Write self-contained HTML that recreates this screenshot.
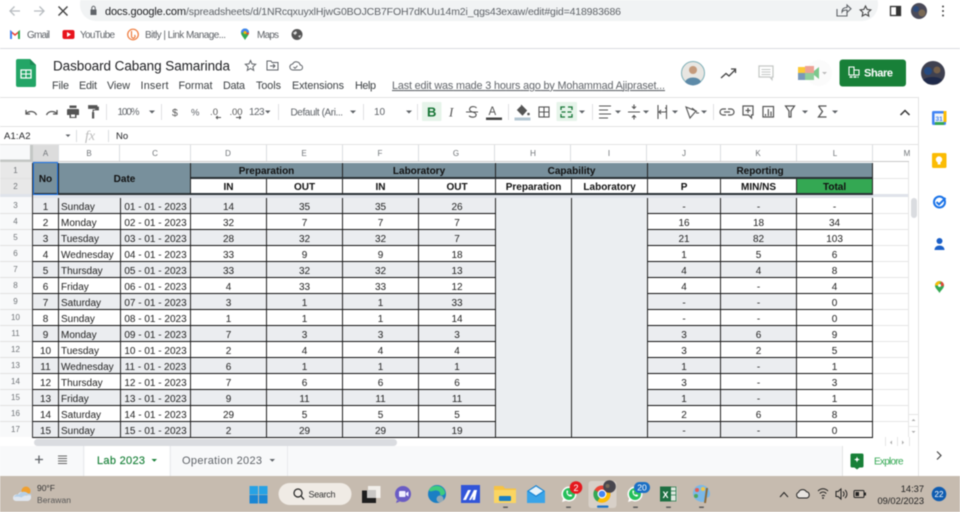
<!DOCTYPE html>
<html lang="en"><head><meta charset="utf-8"><title>Dasboard Cabang Samarinda</title>
<style>
html,body{margin:0;padding:0;background:#fff}
#p{position:relative;width:960px;height:512px;overflow:hidden;font-family:"Liberation Sans",sans-serif;filter:blur(.4px)}
svg.c{position:absolute;left:0;top:0}
svg text{font-family:"Liberation Sans",sans-serif}
table.g{position:absolute;left:33px;top:163px;border-collapse:separate;border-spacing:0;table-layout:fixed;width:840px;font-size:10px;color:#222;border-left:1px solid #333;margin-left:-1px}
table.g td{box-sizing:border-box;height:16px;padding:5px 0 0;line-height:10px;text-align:center;border-right:1px solid #222;border-bottom:1px solid #111;overflow:hidden;white-space:nowrap;background:#fff}
table.g td.l{text-align:left;padding-left:2px}
table.g tr.a td{background:#ebedf0}
table.g tr.a td.w{background:#fff}
table.g td.h{background:#78909c;font-weight:bold;color:#111;border-bottom:2px solid #2a3236;padding-top:4px;line-height:10px}
table.g td.r{padding-top:3px;line-height:14px}
table.g td.s{background:#fff;font-weight:bold;color:#111;border-bottom:2px solid #2a3236;padding-top:4px;line-height:10px}
table.g td.t{background:#34a853;font-weight:bold;color:#111;border-bottom:2px solid #2a3236;padding-top:4px;line-height:10px}
table.g td.m{background:#ebeef1 !important;vertical-align:top}
table.g tr.gap td{height:3px;padding:0;background:#dfe3ea;border:0;line-height:0;font-size:0}
#sel{position:absolute;left:33px;top:162px;width:25px;height:33px;box-sizing:border-box;border:1px solid #1a73e8}
</style></head><body><div id="p">
<svg class="c" width="960" height="512" viewBox="0 0 960 512">
<!-- browser top -->
<rect width="960" height="48" fill="#fff"/>
<rect x="80" y="-12" width="798" height="33" rx="16" fill="#f1f3f4"/>
<g fill="none" stroke="#b8bcc0" stroke-width="1.300"><path d="M20 11H10M14.500 6.500L10 11l4.500 4.500"/><path d="M34 11h10M39.500 6.500L44 11l-4.500 4.500"/></g>
<path d="M58.500 6.500l9 9M67.500 6.500l-9 9" stroke="#444" stroke-width="1.400" fill="none"/>
<path d="M90.500 9.500h6v5.500h-6z" fill="#5f6368"/><path d="M91.800 9.500V8a1.700 1.700 0 013.400 0v1.500" stroke="#5f6368" fill="none"/>
<text x="105" y="15" font-size="11" fill="#202124" textLength="81">docs.google.com</text>
<text x="186" y="15" font-size="10.500" fill="#5f6368" textLength="435">/spreadsheets/d/1NRcqxuyxlHjwG0BOJCB7FOH7dKUu14m2i_qgs43exaw/edit#gid=418983686</text>
<g fill="none" stroke="#5f6368" stroke-width="1.100"><path d="M837 9v7h10v-4M842 12c0-3 2-4.500 5-4.500V5l4 3.800-4 3.700v-2.500c-2 0-4 .5-5 2z"/><path d="M865.500 6l1.600 3.400 3.700.5-2.700 2.500.7 3.700-3.300-1.800-3.300 1.800.7-3.700-2.700-2.500 3.700-.5z" stroke="#444"/></g>
<rect x="890.500" y="6.500" width="10" height="9" fill="none" stroke="#333" stroke-width="1.300"/><rect x="896" y="6.500" width="4.500" height="9" fill="#333"/>
<circle cx="919" cy="11" r="8" fill="#4a4a58"/><circle cx="916" cy="9" r="3" fill="#2c4a7a"/><circle cx="922" cy="13" r="3.500" fill="#7a6a55"/>
<g fill="#444"><circle cx="943" cy="6.500" r="1"/><circle cx="943" cy="11" r="1"/><circle cx="943" cy="15.500" r="1"/></g>
<!-- bookmarks -->
<path d="M10 39V30l5 4 5-4v9h-2v-5.500l-3 2.500-3-2.500V39z" fill="#ea4335"/><path d="M10 39V30l2 1.500V39z" fill="#4285f4"/><path d="M20 39V30l-2 1.500V39z" fill="#34a853"/>
<text x="27" y="38" font-size="10" fill="#5f6368" textLength="23">Gmail</text>
<rect x="62.500" y="30" width="12" height="9" rx="2" fill="#e8141c"/><path d="M67 32l4 2.500-4 2.500z" fill="#fff"/>
<text x="80" y="38" font-size="10" fill="#5f6368" textLength="35">YouTube</text>
<circle cx="133" cy="34.500" r="5.300" fill="none" stroke="#ee7a3c" stroke-width="1.200"/><path d="M131.500 31v5.500a1.800 1.800 0 103-1.500" fill="none" stroke="#ee7a3c" stroke-width="1.200"/>
<text x="145" y="38" font-size="10" fill="#5f6368" textLength="81">Bitly | Link Manage...</text>
<path d="M245 40c-1.500-3-4-4.500-4-7.500a4 4 0 018 0c0 3-2.500 4.500-4 7.500z" fill="#34a853"/><path d="M241 32.500a4 4 0 018 0l-4 .3z" fill="#4285f4"/><path d="M249 32.500c0 1-.3 1.700-.8 2.500L245 33z" fill="#ea4335"/><circle cx="245" cy="32.500" r="1.500" fill="#fbbc04"/>
<text x="257" y="38" font-size="10" fill="#5f6368" textLength="22">Maps</text>
<circle cx="297" cy="34.500" r="5.500" fill="#555"/><path d="M293 33l3-2 1 2-2 2zM298 36l3-1-1 3z" fill="#ddd"/>
<rect y="48" width="960" height="1" fill="#dadce0"/>
<!-- docs header -->
<path d="M18 59h12l6 6v20a2 2 0 01-2 2H18a2 2 0 01-2-2V61a2 2 0 012-2z" fill="#23a566"/><path d="M30 59l6 6h-6z" fill="#1b8a55"/>
<path d="M21 70h10v8H21z" fill="none" stroke="#fff" stroke-width="1.300"/><path d="M21 74h10M26 70v8" stroke="#fff" stroke-width="1.100"/>
<text x="53" y="70.500" font-size="13.500" fill="#202124" textLength="177">Dasboard Cabang Samarinda</text>
<g fill="none" stroke="#5f6368" stroke-width="1"><path d="M250.500 60.500l1.500 3.400 3.700.4-2.800 2.500.8 3.600-3.200-1.900-3.200 1.900.8-3.600-2.800-2.500 3.700-.4z"/><path d="M267 61h4l1 1.500h6V70h-11zM270 66h5M273 64l2 2-2 2"/><path d="M293 70a3 3 0 01-.3-6 4 4 0 017.500 1 2.500 2.500 0 01-.4 5zM293.500 67l1.500 1.300 2.500-2.500"/></g>
<g font-size="10.800" fill="#3c4043"><text x="52" y="89" textLength="17">File</text><text x="79" y="89" textLength="18">Edit</text><text x="107" y="89" textLength="23">View</text><text x="140.500" y="89" textLength="28">Insert</text><text x="178.500" y="89" textLength="34">Format</text><text x="223" y="89" textLength="22">Data</text><text x="256" y="89" textLength="25">Tools</text><text x="292" y="89" textLength="52">Extensions</text><text x="355" y="89" textLength="21">Help</text></g>
<text x="392" y="89" font-size="10.800" fill="#5f6368" textLength="273" text-decoration="underline">Last edit was made 3 hours ago by Mohammad Ajipraset...</text>
<circle cx="693" cy="73" r="11.500" fill="#e8e6e2" stroke="#7fb0b8" stroke-width="1"/><circle cx="693" cy="70" r="4" fill="#c49a7c"/><path d="M685 82c2-6 14-6 16 0a11 11 0 01-16 0z" fill="#5d8aa8"/>
<path d="M721 78l5-4.500 3 2.500 6-6M731 69h4.500v4" fill="none" stroke="#444" stroke-width="1.300"/>
<path d="M759 66h14v11h-1v2.500L770 77h-11z" fill="none" stroke="#c4c7c5" stroke-width="1.200"/><path d="M761.500 69.500h9M761.500 72h9M761.500 74.500h9" stroke="#c4c7c5"/>
<circle cx="819" cy="73" r="13" fill="#fbfbfb"/>
<rect x="798" y="67" width="7" height="13" fill="#fbbc04" opacity=".8"/><rect x="798" y="73" width="7" height="7" fill="#4285f4" opacity=".7"/><rect x="805" y="66" width="9" height="7" fill="#ea8c7c" opacity=".8"/><rect x="805" y="73" width="9" height="7" fill="#8fce9c"/><path d="M814 71l5-4v12l-5-4z" fill="#7cc78c"/>
<path d="M822 72h5l-2.500 2.500z" fill="#bbb"/>
<rect x="839.500" y="59.500" width="66.500" height="27" rx="3" fill="#188038"/>
<path d="M849 67h5v8h-5zM854 70h5v5h-5z" fill="none" stroke="#fff" stroke-width="1.100"/><path d="M849.500 77h9" stroke="#fff" stroke-width="1.500" stroke-dasharray="3 1"/>
<text x="864" y="76.500" font-size="11" font-weight="bold" fill="#fff" textLength="29">Share</text>
<circle cx="933" cy="73" r="12" fill="#3f4150"/><circle cx="928" cy="71" r="4" fill="#254a80"/><circle cx="937" cy="70" r="3.500" fill="#75604a"/><path d="M923 80c4-4 16-4 19 0l-5 4h-9z" fill="#1f2a4a"/>
<rect y="97" width="918" height="1" fill="#e3e3e3"/>
<rect y="126" width="918" height="1" fill="#e3e3e3"/>
<rect x="918" y="97" width="1" height="379" fill="#e3e3e3"/>
<!-- toolbar -->
<g fill="none" stroke="#555" stroke-width="1.300">
<path d="M36.500 115c-1.500-3.500-6-5-10.500-1.500M26 110v4h4"/><path d="M46.500 115c1.500-3.500 6-5 10.500-1.500M57 110v4h-4"/>
</g>
<path d="M68 109h10a1 1 0 011 1v5h-2.500v3h-7v-3H67v-5a1 1 0 011-1zM69.500 105.500h7V108h-7zM71 114.500v2.500h4v-2.500z" fill="#555" fill-rule="evenodd"/>
<path d="M88.500 105.500h8.500v3h-8.500zM97 107h1.500v3H93v2" fill="#555" stroke="#555" stroke-width=".8"/><rect x="92" y="112" width="2.200" height="6.500" fill="#555"/>
<g fill="#e0e1e3"><rect x="106" y="104" width="1" height="16"/><rect x="161" y="104" width="1" height="16"/><rect x="278" y="104" width="1" height="16"/><rect x="363" y="104" width="1" height="16"/><rect x="417" y="104" width="1" height="16"/><rect x="508" y="104" width="1" height="16"/><rect x="592" y="104" width="1" height="16"/><rect x="713" y="104" width="1" height="16"/></g>
<g font-size="10" fill="#5f6368"><text x="117.500" y="115" textLength="22">100%</text><text x="172" y="116" font-size="10.500" fill="#555">$</text><text x="191" y="115.500" font-size="9.500">%</text><text x="249" y="115" textLength="15.500">123</text><text x="290.500" y="115.500" textLength="52.500">Default (Ari...</text><text x="374" y="115" textLength="11">10</text></g>
<g font-size="9.500" fill="#555"><text x="210" y="115" textLength="8">.0</text><text x="229.500" y="115" textLength="13">.00</text></g>
<path d="M216 117.500h5M216 117.500l1.800-1.500M216 117.500l1.800 1.500M236 117.500h5M241 117.500l-1.800-1.500M241 117.500l-1.800 1.500" stroke="#555" fill="none"/>
<g fill="#5f6368"><path d="M149 110.500h6l-3 3zM265 110.500h5.500l-2.700 3zM350 110.500h6l-3 3zM406 110.500h6l-3 3zM579 110.500h6l-3 3zM615 110.500h6l-3 3zM643 110.500h6l-3 3zM672 110.500h6l-3 3zM701 110.500h6l-3 3zM802 110.500h6l-3 3zM832 110.500h6l-3 3z"/></g>
<rect x="422" y="102" width="19.500" height="19" rx="1" fill="#e6f4ea"/>
<text x="427" y="116.500" font-size="13" font-weight="bold" fill="#137333">B</text>
<text x="449" y="116.500" font-size="13" font-style="italic" fill="#555" style="font-family:'Liberation Serif'">I</text>
<path d="M476.500 108c-1-1.700-5-2-6.500 0-1.300 2 .5 3.500 2.500 4 2 .5 4 1.500 3.500 3.500-.5 2-5 2.300-7 .3M466 112h12" fill="none" stroke="#555" stroke-width="1.100"/>
<text x="488.500" y="115" font-size="11.500" fill="#555">A</text><rect x="486" y="117.500" width="16" height="2.500" fill="#444"/>
<path d="M521 105l5.500 5.500-4 4.500-5-5 3.500-3.500" fill="#555" stroke="#555"/><circle cx="528.500" cy="114" r="1.300" fill="#555"/><rect x="514.500" y="117.500" width="16" height="3" fill="#b4c7d3"/>
<g fill="none" stroke="#555" stroke-width="1.100"><rect x="539" y="107" width="10" height="10"/><path d="M544 107v10M539 112h10"/></g>
<rect x="556.500" y="102" width="20.500" height="19" rx="1" fill="#e6f4ea"/>
<g fill="none" stroke="#137333" stroke-width="1.300"><path d="M561 110v-3h4M572 110v-3h-4M561 114v3h4M572 114v3h-4M561.500 112h4M567.500 112h4"/></g>
<g stroke="#555" stroke-width="1.100" fill="none"><path d="M599 106h12M599 110h9M599 114h12M599 118h9"/><path d="M628 112h12M634 104.500v4M634 119.500v-4M632 106.500l2 2 2-2M632 117.500l2-2 2 2"/><path d="M658 105v14M666.500 105v14M659 112h6c2 0 2-4 0-4M661 110l-2 2 2 2"/><path d="M686 107l10 4-6 7zM697 112l-5-4M699 113h-3"/></g>
<g stroke="#555" stroke-width="1.200" fill="none"><path d="M727 109h-3a3 3 0 000 6h3M729 109h3a3 3 0 010 6h-3M725 112h6" transform="translate(-1 0)"/><path d="M743 106h10v9h-1.500v3l-3-3H743z"/><path d="M748 108v5M745.500 110.500h5"/><rect x="763" y="106.500" width="10.500" height="10.500"/><path d="M765.500 114v2M768.300 109v7M771 111.500v4.500"/><path d="M785.500 106h9l-3.500 5v6h-2v-6z"/><path d="M818.500 106h8M818.500 106l4 5.500-4 5.500h8" stroke-width="1.300"/></g>
<path d="M900.500 115l4.500-4.500 4.500 4.500" fill="none" stroke="#333" stroke-width="1.500"/>
<!-- formula bar -->
<rect y="127" width="918" height="18" fill="#fff"/>
<text x="4" y="139" font-size="9.500" fill="#202124" textLength="26.500">A1:A2</text>
<path d="M65.500 134.500h5l-2.500 2.500z" fill="#5f6368"/>
<rect x="76" y="130" width="1" height="12" fill="#dadce0"/>
<text x="85" y="140" font-size="14" font-style="italic" fill="#bbb" style="font-family:'Liberation Serif'">fx</text>
<rect x="108" y="130" width="1" height="12" fill="#dadce0"/>
<text x="116" y="139" font-size="9.500" fill="#202124">No</text>
<rect y="144" width="918" height="1" fill="#e3e3e3"/>
<!-- col header -->
<rect y="145" width="909" height="17" fill="#fff"/>
<rect y="145" width="33" height="17" fill="#f8f9fa"/>
<rect x="33" y="145" width="25" height="17" fill="#dcdcdc"/>
<rect x="30" y="145" width="3" height="17" fill="#c4c7c5"/><rect y="159.500" width="33" height="2.500" fill="#c4c7c5"/>
<g stroke="#dadce0"><path d="M58.500 145v17M119.500 145v17M190.500 145v17M266.500 145v17M342.500 145v17M418.500 145v17M494.500 145v17M570.500 145v17M646.500 145v17M720.500 145v17M796.500 145v17M872.500 145v17"/></g>
<rect x="33" y="161" width="876" height="1" fill="#c8c8c8"/>
<g font-size="8" fill="#6f7377" text-anchor="middle"><text x="45.500" y="156">A</text><text x="89" y="156">B</text><text x="155" y="156">C</text><text x="228" y="156">D</text><text x="304" y="156">E</text><text x="380" y="156">F</text><text x="456" y="156">G</text><text x="533" y="156">H</text><text x="609" y="156">I</text><text x="684" y="156">J</text><text x="758" y="156">K</text><text x="835" y="156">L</text><text x="907" y="156">M</text></g>
<!-- row header -->
<rect y="162" width="33" height="275" fill="#f8f9fa"/>
<rect y="162" width="33" height="32" fill="#e8e8e8"/>
<rect y="194" width="33" height="3" fill="#dfe3ea"/>
<g stroke="#e1e1e1"><path d="M0 178.500h33M0 213.500h33M0 229.500h33M0 245.500h33M0 261.500h33M0 277.500h33M0 293.500h33M0 309.500h33M0 325.500h33M0 341.500h33M0 357.500h33M0 373.500h33M0 389.500h33M0 405.500h33M0 421.500h33M0 437.500h33"/></g>
<rect x="32" y="162" width="1" height="275" fill="#c8c8c8"/>
<g font-size="8" fill="#6f7377" text-anchor="middle"><text x="15.500" y="173">1</text><text x="15.500" y="189">2</text><text x="15.500" y="208">3</text><text x="15.500" y="224">4</text><text x="15.500" y="240">5</text><text x="15.500" y="256">6</text><text x="15.500" y="272">7</text><text x="15.500" y="288">8</text><text x="15.500" y="304">9</text><text x="15.500" y="320">10</text><text x="15.500" y="336">11</text><text x="15.500" y="352">12</text><text x="15.500" y="368">13</text><text x="15.500" y="384">14</text><text x="15.500" y="400">15</text><text x="15.500" y="416">16</text><text x="15.500" y="432">17</text></g>
<!-- M col -->
<rect x="873" y="194" width="36" height="3" fill="#dfe3ea"/>
<g stroke="#e6e6e6"><path d="M873 178.500h36M873 213.500h36M873 229.500h36M873 245.500h36M873 261.500h36M873 277.500h36M873 293.500h36M873 309.500h36M873 325.500h36M873 341.500h36M873 357.500h36M873 373.500h36M873 389.500h36M873 405.500h36M873 421.500h36M908.500 162v275"/></g>
<!-- v scrollbar -->
<rect x="911" y="198" width="6" height="20" rx="3" fill="#dadce0"/>
<g stroke="#e6e6e6" fill="none"><path d="M909 414.500h9M909 426.500h9M909 438.500h9"/></g>
<path d="M913.500 419l-2 2h4zM911.500 431h4l-2 2z" fill="#aaa"/>
<!-- bottom -->
<rect y="437" width="918" height="9" fill="#fff"/>
<rect x="34" y="439" width="363" height="7" rx="3.500" fill="#dadce0"/>
<g stroke="#e6e6e6"><path d="M885.500 437v9M897.500 437v9M909.500 437v9"/></g>
<path d="M892 440.500v4l-2-2zM902 440.500v4l2-2z" fill="#aaa"/>
<rect y="446" width="960" height="30" fill="#f8f9fa"/>
<rect x="918" y="446" width="42" height="30" fill="#fff"/>
<rect x="918" y="446" width="1" height="30" fill="#e3e3e3"/>
<rect x="842" y="446" width="76" height="30" fill="#fff"/><rect x="842" y="446" width="1" height="30" fill="#e3e3e3"/>
<rect x="83" y="446" width="1" height="30" fill="#e8eaed"/>
<rect x="85" y="446" width="84" height="30" fill="#fff"/>
<rect x="170" y="446" width="1" height="30" fill="#e8eaed"/><rect x="287" y="446" width="1" height="30" fill="#e8eaed"/>
<path d="M35 459.500h8M39 455.500v8" stroke="#5f6368" stroke-width="1.300"/>
<path d="M58 456h9M58 458.500h9M58 461h9M58 463.500h9" stroke="#666" stroke-width="1"/>
<text x="97" y="464" font-size="11" fill="#188038" textLength="48" stroke="#188038" stroke-width=".15">Lab 2023</text>
<path d="M151.500 459h5.500l-2.700 2.700z" fill="#188038"/>
<text x="182" y="464" font-size="11" fill="#5f6368" textLength="80">Operation 2023</text>
<path d="M269.500 459h5.500l-2.700 2.700z" fill="#5f6368"/>
<path d="M852 453.500h10a1.500 1.500 0 011.500 1.500v11a1.500 1.500 0 01-1.500 1.500h-2.500l-2.500 2-2.500-2H852a1.500 1.500 0 01-1.500-1.500v-11a1.500 1.500 0 011.500-1.500z" fill="#188038"/>
<path d="M857 456.500c.5 2 1 2.500 3 3-2 .5-2.500 1-3 3-.5-2-1-2.500-3-3 2-.5 2.500-1 3-3z" fill="#fff"/>
<text x="874" y="464.500" font-size="10" fill="#34a853" textLength="29.500">Explore</text>
<path d="M937 451.500l4 4-4 4" fill="none" stroke="#444" stroke-width="1.200"/>
<!-- side panel -->
<rect x="932" y="111" width="14" height="14" rx="1.500" fill="#4285f4"/><rect x="934.500" y="113.500" width="9" height="9" fill="#f0f4f8"/><rect x="943.500" y="111" width="3" height="11" fill="#fbbc04"/><rect x="935" y="122" width="9" height="3" fill="#34a853"/>
<text x="935.500" y="121" font-size="6.500" font-weight="bold" fill="#4285f4">31</text>
<rect x="932" y="153" width="14.500" height="15" rx="1.500" fill="#fbbc04"/><circle cx="939" cy="159.500" r="3.200" fill="#fff"/><rect x="937.700" y="162" width="2.800" height="2.500" fill="#fff"/>
<circle cx="939.500" cy="202" r="5.500" fill="none" stroke="#1a73e8" stroke-width="2"/><path d="M936.500 202l2.500 2.500 6.500-6.500" fill="none" stroke="#1a73e8" stroke-width="2"/>
<circle cx="939.500" cy="241" r="3" fill="#1a5fc8"/><path d="M934.500 250c0-6 10-6 10 0z" fill="#1a5fc8"/>
<path d="M939.500 293c-1.500-3-4.500-4.500-4.500-7.500a4.500 4.500 0 019 0c0 3-3 4.500-4.500 7.500z" fill="#34a853"/><path d="M935 285.500a4.500 4.500 0 016-4l-3 4z" fill="#fbbc04"/><path d="M941 281.500a4.500 4.500 0 013 4l-3 1z" fill="#ea4335"/><circle cx="939.500" cy="285.500" r="1.500" fill="#fff"/>
<!-- taskbar -->
<rect y="476" width="960" height="36" fill="#c6bbaf"/>
<path d="M13 498c0-3 3-4 5-3.500 1-3 6-4 9-1.500 3 .5 4.500 2 4 5-.5 2-2 3-4 3H17c-2.500 0-4-1-4-3z" fill="#dfe6ef"/><circle cx="26" cy="491" r="4.500" fill="#f0a030"/><path d="M14 497c1-2 3-3 5-2.500 1.500-3 6-4 9-1 2 0 3 1 3.500 2-4-1-8 0-10 2-2-1-5-1-7.500-.5z" fill="#b5cfe8"/>
<text x="37" y="491" font-size="8.500" fill="#333" textLength="18">90°F</text>
<text x="37" y="503" font-size="8.500" fill="#555" textLength="34">Berawan</text>
<g fill="#27a2e4"><rect x="249.500" y="486" width="8.500" height="8.500"/><rect x="259" y="486" width="8.500" height="8.500"/></g><g fill="#1a86d4"><rect x="249.500" y="495" width="8.500" height="8.500"/><rect x="259" y="495" width="8.500" height="8.500"/></g>
<rect x="278.500" y="483" width="73" height="22" rx="11" fill="#f0ebe5"/>
<circle cx="298" cy="493" r="4" fill="none" stroke="#222" stroke-width="1.200"/><path d="M301 496l3 3.500" stroke="#222" stroke-width="1.300"/>
<text x="308.500" y="497.500" font-size="9" fill="#333" textLength="27">Search</text>
<rect x="368" y="486" width="12.500" height="12" fill="#f1eeea"/><rect x="362" y="490.500" width="14" height="12.500" fill="#1e1e1e"/><rect x="367" y="490" width="9" height="8" fill="#c9c7c5"/>
<circle cx="403" cy="494" r="8" fill="#6a5cc4"/><path d="M397 500l-1 3 4-1.500z" fill="#6a5cc4"/><rect x="399" y="491" width="6.500" height="6" rx="1" fill="#f0eeff"/><path d="M406 493l2.500-1.500v5l-2.500-1.500z" fill="#f0eeff"/>
<circle cx="437" cy="494" r="9" fill="#1a7fc4"/><path d="M429 490c2-5 13-7 16 2 .5 3-3 4-5 3 1-3-2-5-5-4.500-3 .5-5 2-6-.5z" fill="#3ecb7e"/><circle cx="440" cy="499" r="3.500" fill="#c6bbaf" opacity=".7"/>
<rect x="461" y="485" width="19" height="18" fill="#3155d8"/><path d="M463 500l5-10h3l-5 10zM469 500l5-10h3l-2 10h-2.500l.7-4-2.200 4z" fill="#fff"/>
<path d="M494 486h9l2 2.500h11v14.500h-22z" fill="#f6c343"/><rect x="494" y="490" width="22" height="13" fill="#fbd562"/><rect x="499" y="496" width="12" height="5" rx="1" fill="#1a7fc4"/>
<path d="M527 491l9-6 9 6v12h-18z" fill="#1a86d4"/><path d="M527 491l9 6 9-6v12h-18z" fill="#3aa4e8"/><path d="M529 491l7-4.500 7 4.500-7 4.500z" fill="#e8f3fa"/>
<circle cx="569" cy="494" r="7.500" fill="#fff"/><path d="M562 502l1.500-4.500 3 3z" fill="#fff"/><circle cx="569" cy="494" r="6" fill="#25c05a"/><path d="M566.500 491c-.5 3 2 6 5 5.500l.8-1.300-1.800-1-1 .7c-1-.5-1.500-1-2-2l.8-1-1-1.800z" fill="#fff"/>
<circle cx="576" cy="487.500" r="6.300" fill="#e5181e"/><text x="576" y="491" font-size="9" fill="#fff" text-anchor="middle">2</text>
<rect x="588.500" y="481" width="28" height="27" rx="3" fill="#d8d0c8"/>
<circle cx="602" cy="494" r="8.500" fill="#ea4335"/><path d="M594.500 490a8.500 8.500 0 003 11.500l4.500-7.500z" fill="#34a853"/><path d="M597.500 501.500a8.500 8.500 0 0012.500-10l-8 2.500z" fill="#fbbc04"/><circle cx="602" cy="494" r="4.500" fill="#fff"/><circle cx="602" cy="494" r="3.300" fill="#4285f4"/>
<circle cx="609.500" cy="486.500" r="6.300" fill="#48464e"/><circle cx="607.500" cy="486" r="2" fill="#7a6a5a"/>
<rect x="597" y="505.500" width="11.500" height="2.300" rx="1" fill="#1a73c8"/>
<circle cx="635" cy="494" r="7.500" fill="#fff"/><path d="M628 502l1.500-4.500 3 3z" fill="#fff"/><circle cx="635" cy="494" r="6" fill="#25c05a"/><path d="M632.500 491c-.5 3 2 6 5 5.500l.8-1.300-1.800-1-1 .7c-1-.5-1.500-1-2-2l.8-1-1-1.800z" fill="#fff"/>
<rect x="634" y="482" width="16" height="11" rx="5.500" fill="#1a6fc4"/><text x="642" y="490.500" font-size="8.500" fill="#fff" text-anchor="middle">20</text>
<rect x="664" y="487" width="13" height="14" fill="#dfe8e0"/><path d="M670 487h6v14h-6M670 491h6M670 495h6" stroke="#217346" fill="none" stroke-width=".8"/><rect x="660" y="486.500" width="11" height="15" fill="#1d6f42"/><text x="662.500" y="498" font-size="9" font-weight="bold" fill="#fff">X</text>
<path d="M701 485c5 0 9 4 9 9 0 4-3 3-4 4s0 4-3 4c-6 0-10-4-10-8.500 0-5 3.500-8.500 8-8.500z" fill="#7ab8e8"/><circle cx="697" cy="490" r="2" fill="#e85a4f"/><circle cx="703" cy="489" r="2" fill="#f5c542"/><circle cx="696" cy="496" r="2" fill="#4ea65a"/><path d="M707 488l-2 15" stroke="#8a6a3a" stroke-width="2"/>
<g fill="#5b5b5b"><rect x="503" y="506.500" width="5" height="1.500" rx=".7"/><rect x="566" y="506.500" width="5" height="1.500" rx=".7"/><rect x="633" y="506.500" width="5" height="1.500" rx=".7"/><rect x="666" y="506.500" width="5" height="1.500" rx=".7"/><rect x="699" y="506.500" width="5" height="1.500" rx=".7"/></g>
<path d="M780 497l4-4.500 4 4.500" fill="none" stroke="#222" stroke-width="1"/>
<path d="M799 498a3 3 0 01-.5-5.700 4.500 4.500 0 018-.5 3.200 3.200 0 01.500 6.200z" fill="#e8e4e0" stroke="#222" stroke-width="1"/>
<path d="M818 491c3-3 7-3 10 0M819.800 493.500c2-2 4.500-2 6.500 0M821.800 496c1-1 2-1 3 0" fill="none" stroke="#222" stroke-width="1"/><circle cx="823" cy="498" r=".9" fill="#222"/>
<path d="M836 491.500h2l3-2.500v10l-3-2.500h-2zM843 491.500c1.500 1.500 1.500 3.500 0 5M845 490c2.500 2 2.500 6 0 8" fill="none" stroke="#222"/>
<rect x="854" y="490.500" width="10" height="7" rx="1" fill="none" stroke="#222"/><rect x="855.500" y="492" width="3.500" height="4" fill="#222"/><rect x="864.500" y="492.500" width="1.500" height="3" fill="#222"/>
<text x="924" y="492" font-size="9.300" fill="#222" text-anchor="end">14:37</text>
<text x="924" y="504" font-size="9.300" fill="#222" text-anchor="end">09/02/2023</text>
<circle cx="939" cy="494" r="7.300" fill="#0f5cb0"/><text x="939" y="497" font-size="8" fill="#fff" text-anchor="middle">22</text>
</svg>
<table class="g"><colgroup><col style="width:26px"><col style="width:62px"><col style="width:70px"><col style="width:76px"><col style="width:76px"><col style="width:76px"><col style="width:77px"><col style="width:76px"><col style="width:76px"><col style="width:73px"><col style="width:76px"><col style="width:76px"></colgroup>
<tr><td class="h r" rowspan="2" style="height:32px">No</td><td class="h r" rowspan="2" colspan="2">Date</td><td class="h" colspan="2">Preparation</td><td class="h" colspan="2">Laboratory</td><td class="h" colspan="2">Capability</td><td class="h" colspan="3">Reporting</td></tr>
<tr><td class="s">IN</td><td class="s">OUT</td><td class="s">IN</td><td class="s">OUT</td><td class="s">Preparation</td><td class="s">Laboratory</td><td class="s">P</td><td class="s">MIN/NS</td><td class="t">Total</td></tr>
<tr class="gap"><td colspan="12"></td></tr>
<tr class="a"><td>1</td><td class="l">Sunday</td><td>01 - 01 - 2023</td><td>14</td><td>35</td><td>35</td><td>26</td><td class="m" rowspan="15"></td><td class="m" rowspan="15"></td><td>-</td><td>-</td><td class="w">-</td></tr>
<tr><td>2</td><td class="l">Monday</td><td>02 - 01 - 2023</td><td>32</td><td>7</td><td>7</td><td>7</td><td>16</td><td>18</td><td>34</td></tr>
<tr class="a"><td>3</td><td class="l">Tuesday</td><td>03 - 01 - 2023</td><td>28</td><td>32</td><td>32</td><td>7</td><td>21</td><td>82</td><td class="w">103</td></tr>
<tr><td>4</td><td class="l">Wednesday</td><td>04 - 01 - 2023</td><td>33</td><td>9</td><td>9</td><td>18</td><td>1</td><td>5</td><td>6</td></tr>
<tr class="a"><td>5</td><td class="l">Thursday</td><td>05 - 01 - 2023</td><td>33</td><td>32</td><td>32</td><td>13</td><td>4</td><td>4</td><td class="w">8</td></tr>
<tr><td>6</td><td class="l">Friday</td><td>06 - 01 - 2023</td><td>4</td><td>33</td><td>33</td><td>12</td><td>4</td><td>-</td><td>4</td></tr>
<tr class="a"><td>7</td><td class="l">Saturday</td><td>07 - 01 - 2023</td><td>3</td><td>1</td><td>1</td><td>33</td><td>-</td><td>-</td><td class="w">0</td></tr>
<tr><td>8</td><td class="l">Sunday</td><td>08 - 01 - 2023</td><td>1</td><td>1</td><td>1</td><td>14</td><td>-</td><td>-</td><td>0</td></tr>
<tr class="a"><td>9</td><td class="l">Monday</td><td>09 - 01 - 2023</td><td>7</td><td>3</td><td>3</td><td>3</td><td>3</td><td>6</td><td class="w">9</td></tr>
<tr><td>10</td><td class="l">Tuesday</td><td>10 - 01 - 2023</td><td>2</td><td>4</td><td>4</td><td>4</td><td>3</td><td>2</td><td>5</td></tr>
<tr class="a"><td>11</td><td class="l">Wednesday</td><td>11 - 01 - 2023</td><td>6</td><td>1</td><td>1</td><td>1</td><td>1</td><td>-</td><td class="w">1</td></tr>
<tr><td>12</td><td class="l">Thursday</td><td>12 - 01 - 2023</td><td>7</td><td>6</td><td>6</td><td>6</td><td>3</td><td>-</td><td>3</td></tr>
<tr class="a"><td>13</td><td class="l">Friday</td><td>13 - 01 - 2023</td><td>9</td><td>11</td><td>11</td><td>11</td><td>1</td><td>-</td><td class="w">1</td></tr>
<tr><td>14</td><td class="l">Saturday</td><td>14 - 01 - 2023</td><td>29</td><td>5</td><td>5</td><td>5</td><td>2</td><td>6</td><td>8</td></tr>
<tr class="a"><td>15</td><td class="l">Sunday</td><td>15 - 01 - 2023</td><td>2</td><td>29</td><td>29</td><td>19</td><td>-</td><td>-</td><td class="w">0</td></tr>
</table>
<div id="sel"></div>
</div></body></html>
